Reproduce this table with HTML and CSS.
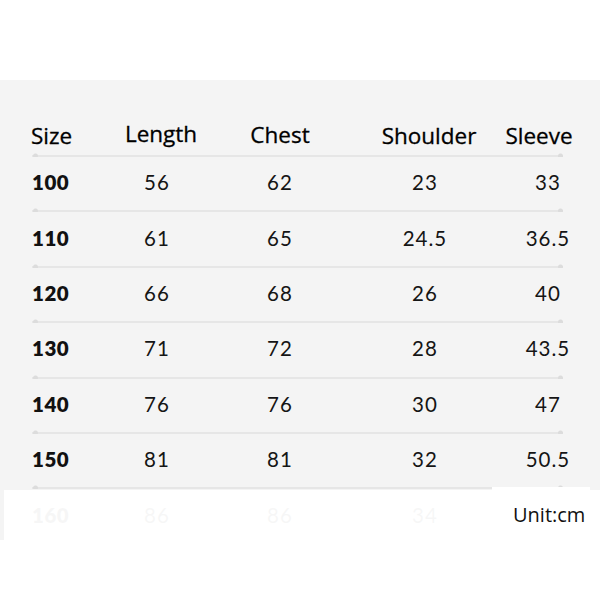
FILE: index.html
```html
<!DOCTYPE html>
<html>
<head>
<meta charset="utf-8">
<link rel="stylesheet" href="styles.css">
</head>
<body>
<div class="panel">
  <div class="row head">
    <div class="c size">Size</div>
    <div class="c length">Length</div>
    <div class="c chest">Chest</div>
    <div class="c shoulder">Shoulder</div>
    <div class="c sleeve">Sleeve</div>
  </div>
  <div class="row data"><div class="c size">100</div><div class="c">56</div><div class="c">62</div><div class="c">23</div><div class="c sleeve">33</div></div>
  <div class="row data"><div class="c size">110</div><div class="c">61</div><div class="c">65</div><div class="c">24.5</div><div class="c sleeve">36.5</div></div>
  <div class="row data"><div class="c size">120</div><div class="c">66</div><div class="c">68</div><div class="c">26</div><div class="c sleeve">40</div></div>
  <div class="row data"><div class="c size">130</div><div class="c">71</div><div class="c">72</div><div class="c">28</div><div class="c sleeve">43.5</div></div>
  <div class="row data"><div class="c size">140</div><div class="c">76</div><div class="c">76</div><div class="c">30</div><div class="c sleeve">47</div></div>
  <div class="row data"><div class="c size">150</div><div class="c">81</div><div class="c">81</div><div class="c">32</div><div class="c sleeve">50.5</div></div>
  <div class="row data"><div class="c size">160</div><div class="c">86</div><div class="c">86</div><div class="c">34</div><div class="c sleeve"></div></div>
  <div class="fade"></div>
  <div class="unit">Unit:cm</div>
</div>
</body>
</html>
```
FILE: styles.css
```css
html, body {
  margin: 0;
  padding: 0;
  background: #ffffff;
}
body {
  width: 600px;
  height: 600px;
  overflow: hidden;
}
.panel {
  position: relative;
  margin-top: 80px;
  height: 460px;
  background: #f4f4f4;
  overflow: hidden;
}
.row {
  display: grid;
  grid-template-columns: 68px 114px 132px 158px 60px;
  width: 532px;
  margin-left: 32px;
  box-sizing: border-box;
  color: #111111;
  background:
    radial-gradient(circle, #dcdcdc 2px, rgba(220,220,220,0) 3px) 0 calc(100% + 2px) / 7px 6px no-repeat,
    radial-gradient(circle, #dcdcdc 2px, rgba(220,220,220,0) 3px) 525px calc(100% + 2px) / 7px 6px no-repeat,
    linear-gradient(#e6e6e6, #e6e6e6) 0 100% / 531px 2px no-repeat;
}
.c {
  text-align: center;
  white-space: nowrap;
}
.c.size {
  text-align: left;
}
.c.sleeve {
  margin-right: -28px;
}
.head {
  height: 77px;
  padding-top: 41px;
  font-family: "Open Sans", "Noto Sans", sans-serif;
  font-size: 22.5px;
  line-height: 30px;
  color: #000000;
  -webkit-text-stroke: 0.3px #000000;
}
.head .size {
  margin-left: -1px;
}
.head .length {
  padding-left: 8px;
  position: relative;
  top: -2px;
}
.head .chest {
  position: relative;
  top: -1px;
}
.head .shoulder {
  padding-left: 8px;
}
.head .sleeve {
  padding-right: 18px;
}
.data {
  height: 55.4px;
  align-items: center;
  padding-bottom: 5px;
  font-family: "Lato", "Open Sans", sans-serif;
  font-size: 20.5px;
  letter-spacing: 1px;
  line-height: 24px;
  color: #151515;
}
.data .size {
  font-weight: 800;
  letter-spacing: 0.5px;
  color: #111111;
}
.fade {
  position: absolute;
  left: 4px;
  right: 0;
  top: 410px;
  bottom: 0;
  background: rgba(255, 255, 255, 0.965);
}
.unit {
  position: absolute;
  left: 492px;
  top: 407px;
  width: 98px;
  bottom: 0;
  box-sizing: border-box;
  padding-top: 14px;
  padding-left: 21px;
  background: #ffffff;
  font-family: "Open Sans", "Noto Sans", sans-serif;
  font-size: 20px;
  line-height: 28px;
  color: #111111;
}
```
